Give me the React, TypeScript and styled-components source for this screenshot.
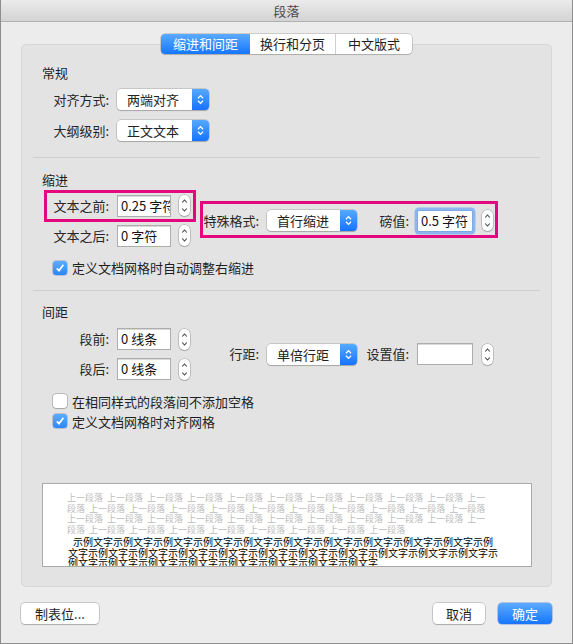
import React from 'react';
import styled, { createGlobalStyle } from 'styled-components';

const GlobalStyle = createGlobalStyle`
  html, body {
    margin: 0;
    padding: 0;
    background: #ececec;
  }
  body {
    font-family: "Noto Sans CJK SC", "Noto Sans", sans-serif;
  }
  * {
    box-sizing: border-box;
  }
`;

const tabs = ['缩进和间距', '换行和分页', '中文版式'];
const tabWidths = [89, 86, 76];

const prevText = Array(40).fill('上一段落').join(' ');
const sampleText = Array(29).fill('示例文字').join('');

const PopupArrows = () => (
    <svg width="7" height="11" viewBox="0 0 7 11">
        <path d="M1 4.2 L3.5 1.6 L6 4.2 M1 6.8 L3.5 9.4 L6 6.8" stroke="#fff" strokeWidth="1.3" fill="none" />
    </svg>
);

const StepArrows = () => (
    <svg width="7" height="17" viewBox="0 0 7 17">
        <path d="M1.2 5.5 L3.5 3 L5.8 5.5 M1.2 11.5 L3.5 14 L5.8 11.5" stroke="#444" strokeWidth="1.1" fill="none" />
    </svg>
);

const Check = () => (
    <svg width="10" height="10" viewBox="0 0 10 10">
        <path d="M1.8 5.3 L4 7.6 L8.4 1.8" stroke="#fff" strokeWidth="1.7" fill="none" />
    </svg>
);

const App: React.FC = () => {
    return (
        <>
            <GlobalStyle />
            <Window>
                <TitleBar>段落</TitleBar>
                <Body>
                    <Tabs>
                        {tabs.map((t, i) => (
                            <Tab key={t} active={i === 0} w={tabWidths[i]} last={i === tabs.length - 1}>
                                {t}
                            </Tab>
                        ))}
                    </Tabs>
                    <Panel>
                        <SectionTitle>常规</SectionTitle>
                        <Row mt={8}>
                            <Label>对齐方式:</Label>
                            <Popup w={92}>
                                <PopupText>两端对齐</PopupText>
                                <PopupArrow><PopupArrows /></PopupArrow>
                            </Popup>
                        </Row>
                        <Row mt={10}>
                            <Label>大纲级别:</Label>
                            <Popup w={92}>
                                <PopupText>正文文本</PopupText>
                                <PopupArrow><PopupArrows /></PopupArrow>
                            </Popup>
                        </Row>

                        <Separator mt={16} />

                        <SectionTitle>缩进</SectionTitle>
                        <Split mt={7}>
                            <Column>
                                <Row>
                                    <Label>文本之前:</Label>
                                    <Field w={54}>0.25 字符</Field>
                                    <Stepper><StepArrows /></Stepper>
                                </Row>
                                <Row mt={8}>
                                    <Label>文本之后:</Label>
                                    <Field w={54}>0 字符</Field>
                                    <Stepper><StepArrows /></Stepper>
                                </Row>
                            </Column>
                            <Row>
                                <SideLabel>特殊格式:</SideLabel>
                                <Popup w={90}>
                                    <PopupText>首行缩进</PopupText>
                                    <PopupArrow><PopupArrows /></PopupArrow>
                                </Popup>
                                <ValueLabel>磅值:</ValueLabel>
                                <Field w={56} focused>0.5 字符</Field>
                                <Stepper gap={9}><StepArrows /></Stepper>
                            </Row>
                        </Split>
                        <CheckRow mt={13}>
                            <CheckBox checked><Check /></CheckBox>
                            定义文档网格时自动调整右缩进
                        </CheckRow>

                        <Separator mt={14} />

                        <SectionTitle>间距</SectionTitle>
                        <Split mt={8}>
                            <Column>
                                <Row>
                                    <Label>段前:</Label>
                                    <Field w={54}>0 线条</Field>
                                    <Stepper><StepArrows /></Stepper>
                                </Row>
                                <Row mt={8}>
                                    <Label>段后:</Label>
                                    <Field w={54}>0 线条</Field>
                                    <Stepper><StepArrows /></Stepper>
                                </Row>
                            </Column>
                            <Row>
                                <SideLabel>行距:</SideLabel>
                                <Popup w={90}>
                                    <PopupText>单倍行距</PopupText>
                                    <PopupArrow><PopupArrows /></PopupArrow>
                                </Popup>
                                <ValueLabel>设置值:</ValueLabel>
                                <Field w={56}></Field>
                                <Stepper gap={9}><StepArrows /></Stepper>
                            </Row>
                        </Split>
                        <CheckRow mt={13}>
                            <CheckBox />
                            在相同样式的段落间不添加空格
                        </CheckRow>
                        <CheckRow mt={4}>
                            <CheckBox checked><Check /></CheckBox>
                            定义文档网格时对齐网格
                        </CheckRow>

                        <Preview>
                            <PrevPara>{prevText}</PrevPara>
                            <SamplePara>{sampleText}</SamplePara>
                        </Preview>
                    </Panel>
                    <Footer>
                        <Button w={78}>制表位...</Button>
                        <FooterRight>
                            <Button w={52}>取消</Button>
                            <Button w={54} primary>确定</Button>
                        </FooterRight>
                    </Footer>
                </Body>
                <Marker style={{ left: 43, top: 190, width: 152, height: 32 }} />
                <Marker style={{ left: 199, top: 201, width: 298, height: 37 }} />
            </Window>
        </>
    );
};

const Window = styled.div`
    position: relative;
    width: 573px;
    height: 644px;
    background: #ececec;
    border: 1px solid #8e8e8e;
    border-top: none;
    display: flex;
    flex-direction: column;
    font-size: 13px;
    color: #262626;
    overflow: hidden;
`;

const TitleBar = styled.div`
    height: 22px;
    flex-shrink: 0;
    background: linear-gradient(#ebebeb, #d3d3d3);
    border-bottom: 1px solid #b1b1b1;
    text-align: center;
    line-height: 21px;
    font-size: 13px;
    color: #4b4b4b;
`;

const Body = styled.div`
    display: flex;
    flex-direction: column;
    padding: 12px 20px 0 20px;
`;

const Tabs = styled.div`
    align-self: center;
    display: flex;
    height: 20px;
    margin-bottom: -10px;
    position: relative;
    z-index: 1;
    background: #fff;
    border-radius: 4px;
    box-shadow: 0 0 0 0.5px rgba(0, 0, 0, 0.28), 0 1px 1px rgba(0, 0, 0, 0.12);
`;

interface TabProps {
    active: boolean;
    w: number;
    last: boolean;
}

const Tab = styled.div<TabProps>`
    width: ${({ w }) => w}px;
    height: 20px;
    line-height: 20px;
    text-align: center;
    font-size: 13px;
    color: ${({ active }) => (active ? '#fff' : '#1e1e1e')};
    background: ${({ active }) => (active ? 'linear-gradient(#5aaaff, #1677ff)' : 'transparent')};
    border-right: ${({ last, active }) => (last || active ? 'none' : '1px solid #cfcfcf')};
    &:first-child {
        border-radius: 4px 0 0 4px;
    }
    &:last-child {
        border-radius: 0 4px 4px 0;
    }
`;

const Panel = styled.div`
    width: 531px;
    height: 543px;
    flex-shrink: 0;
    background: #e3e3e3;
    border: 1px solid #d7d7d7;
    border-radius: 5px;
    padding: 20px 20px 19px 20px;
    display: flex;
    flex-direction: column;
`;

const SectionTitle = styled.div`
    height: 16px;
    line-height: 16px;
    font-size: 13px;
    color: #1f1f1f;
`;

interface SpaceProps {
    mt?: number;
}

const Row = styled.div<SpaceProps>`
    display: flex;
    align-items: center;
    height: 22px;
    margin-top: ${({ mt }) => mt || 0}px;
`;

const Split = styled.div<SpaceProps>`
    display: flex;
    align-items: center;
    margin-top: ${({ mt }) => mt || 0}px;
`;

const Column = styled.div`
    display: flex;
    flex-direction: column;
`;

const Label = styled.div`
    width: 67px;
    margin-right: 8px;
    text-align: right;
    white-space: nowrap;
    line-height: 16px;
`;

const SideLabel = styled(Label)`
    width: 69px;
`;

const ValueLabel = styled(Label)`
    width: 52px;
`;

interface WidthProps {
    w: number;
}

const Popup = styled.div<WidthProps>`
    width: ${({ w }) => w}px;
    height: 21px;
    display: flex;
    background: #fff;
    border-radius: 4px;
    box-shadow: 0 0 0 0.5px rgba(0, 0, 0, 0.25), 0 1px 1px rgba(0, 0, 0, 0.16);
`;

const PopupText = styled.div`
    flex: 1;
    padding-left: 10px;
    line-height: 21px;
    font-size: 13px;
    color: #222;
    white-space: nowrap;
`;

const PopupArrow = styled.div`
    width: 17px;
    display: flex;
    align-items: center;
    justify-content: center;
    background: linear-gradient(#56a9ff, #1673ff);
    border-radius: 0 4px 4px 0;
`;

interface FieldProps {
    w: number;
    focused?: boolean;
}

const Field = styled.div<FieldProps>`
    width: ${({ w }) => w}px;
    height: 22px;
    background: #fff;
    border: 1px solid ${({ focused }) => (focused ? '#7da9e3' : '#adadad')};
    box-shadow: ${({ focused }) => (focused ? '0 0 0 2.5px #8db7ee' : 'inset 0 1px 0 #d9d9d9')};
    border-radius: ${({ focused }) => (focused ? '2px' : '0')};
    padding-left: 3px;
    line-height: 20px;
    font-size: 13px;
    color: #111;
    white-space: nowrap;
    overflow: hidden;
`;

interface StepperProps {
    gap?: number;
}

const Stepper = styled.div<StepperProps>`
    width: 11px;
    height: 21px;
    margin-left: ${({ gap }) => gap || 8}px;
    background: #fff;
    border-radius: 5px;
    box-shadow: 0 0 0 0.5px rgba(0, 0, 0, 0.3), 0 1px 1px rgba(0, 0, 0, 0.12);
    display: flex;
    align-items: center;
    justify-content: center;
`;

const Separator = styled.div<SpaceProps>`
    height: 1px;
    background: #cdcdcd;
    margin: ${({ mt }) => mt || 0}px -9px 14px -9px;
`;

const CheckRow = styled.div<SpaceProps>`
    display: flex;
    align-items: center;
    height: 16px;
    margin-top: ${({ mt }) => mt || 0}px;
    padding-left: 11px;
    font-size: 13px;
    color: #1f1f1f;
    white-space: nowrap;
`;

interface CheckProps {
    checked?: boolean;
}

const CheckBox = styled.div<CheckProps>`
    width: 14px;
    height: 14px;
    margin-right: 5px;
    border-radius: 3px;
    display: flex;
    align-items: center;
    justify-content: center;
    background: ${({ checked }) => (checked ? 'linear-gradient(#5eacff, #2c86f7)' : '#fff')};
    box-shadow: ${({ checked }) =>
        checked ? '0 0 0 0.5px rgba(0, 60, 160, 0.4)' : '0 0 0 0.5px rgba(0, 0, 0, 0.35), 0 1px 1px rgba(0, 0, 0, 0.1)'};
`;

const Preview = styled.div`
    margin-top: 54px;
    width: 490px;
    height: 84px;
    flex-shrink: 0;
    background: #fff;
    border: 1px solid #a9a9a9;
    padding: 9px 0 0 24px;
    overflow: hidden;
`;

const PrevPara = styled.div`
    width: 420px;
    font-size: 9px;
    line-height: 10.7px;
    word-spacing: 2px;
    color: #bcbcbc;
`;

const SamplePara = styled.div`
    width: 431px;
    margin-top: 1px;
    margin-left: 1px;
    font-size: 10px;
    line-height: 10.7px;
    text-indent: 5px;
    color: #000;
`;

const Footer = styled.div`
    display: flex;
    justify-content: space-between;
    margin-top: 16px;
`;

const FooterRight = styled.div`
    display: flex;
    gap: 13px;
`;

interface ButtonProps {
    w: number;
    primary?: boolean;
}

const Button = styled.div<ButtonProps>`
    width: ${({ w }) => w}px;
    height: 21px;
    line-height: 21px;
    text-align: center;
    font-size: 13px;
    border-radius: 4px;
    color: ${({ primary }) => (primary ? '#fff' : '#1e1e1e')};
    background: ${({ primary }) => (primary ? 'linear-gradient(#5aaaff, #1677ff)' : '#fff')};
    box-shadow: ${({ primary }) =>
        primary ? '0 0 0 0.5px rgba(0, 70, 200, 0.5)' : '0 0 0 0.5px rgba(0, 0, 0, 0.3), 0 1px 1px rgba(0, 0, 0, 0.14)'};
`;

const Marker = styled.div`
    position: absolute;
    border: 3px solid #e4087f;
    pointer-events: none;
`;

export default App;
